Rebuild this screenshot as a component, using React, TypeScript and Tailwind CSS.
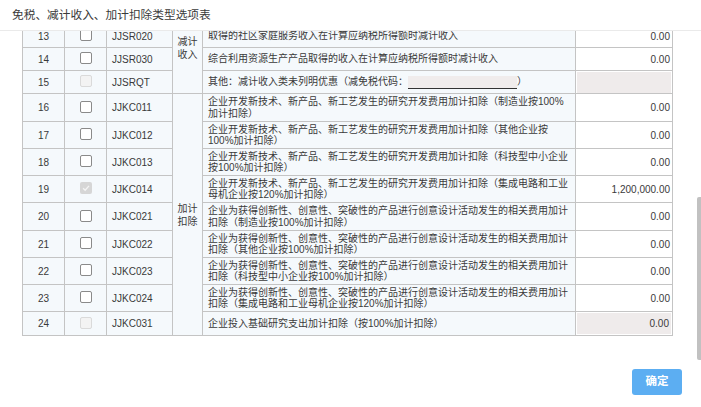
import type { ReactNode } from "react";

type Box = "normal" | "disabled" | "checked";

interface Row {
  no: number;
  code: string;
  box: Box;
  desc: ReactNode[];
  amount: string | null;
  gray?: boolean;
  h: string;
}

const font = { fontFamily: '"Liberation Sans", "Noto Sans CJK SC", sans-serif' };

const rows: Row[] = [
  { no: 13, code: "JJSR020", box: "normal", desc: ["取得的社区家庭服务收入在计算应纳税所得额时减计收入"], amount: "0.00", h: "h-[23px]" },
  { no: 14, code: "JJSR030", box: "normal", desc: ["综合利用资源生产产品取得的收入在计算应纳税所得额时减计收入"], amount: "0.00", h: "h-[23px]" },
  {
    no: 15,
    code: "JJSRQT",
    box: "disabled",
    desc: [
      <span className="flex items-center">
        其他：减计收入类未列明优惠（减免税代码：
        <span className="inline-block w-[109px] h-[13px] bg-[#f0ecec] border-b border-[#333]" />
        ）
      </span>,
    ],
    amount: null,
    gray: true,
    h: "h-[23px]",
  },
  { no: 16, code: "JJKC011", box: "normal", desc: ["企业开发新技术、新产品、新工艺发生的研究开发费用加计扣除（制造业按100%", "加计扣除）"], amount: "0.00", h: "h-[28px]" },
  { no: 17, code: "JJKC012", box: "normal", desc: ["企业开发新技术、新产品、新工艺发生的研究开发费用加计扣除（其他企业按", "100%加计扣除）"], amount: "0.00", h: "h-[27px]" },
  { no: 18, code: "JJKC013", box: "normal", desc: ["企业开发新技术、新产品、新工艺发生的研究开发费用加计扣除（科技型中小企业", "按100%加计扣除）"], amount: "0.00", h: "h-[27px]" },
  { no: 19, code: "JJKC014", box: "checked", desc: ["企业开发新技术、新产品、新工艺发生的研究开发费用加计扣除（集成电路和工业", "母机企业按120%加计扣除）"], amount: "1,200,000.00", h: "h-[27px]" },
  { no: 20, code: "JJKC021", box: "normal", desc: ["企业为获得创新性、创意性、突破性的产品进行创意设计活动发生的相关费用加计", "扣除（制造业按100%加计扣除）"], amount: "0.00", h: "h-[28px]" },
  { no: 21, code: "JJKC022", box: "normal", desc: ["企业为获得创新性、创意性、突破性的产品进行创意设计活动发生的相关费用加计", "扣除（其他企业按100%加计扣除）"], amount: "0.00", h: "h-[27px]" },
  { no: 22, code: "JJKC023", box: "normal", desc: ["企业为获得创新性、创意性、突破性的产品进行创意设计活动发生的相关费用加计", "扣除（科技型中小企业按100%加计扣除）"], amount: "0.00", h: "h-[27px]" },
  { no: 23, code: "JJKC024", box: "normal", desc: ["企业为获得创新性、创意性、突破性的产品进行创意设计活动发生的相关费用加计", "扣除（集成电路和工业母机企业按120%加计扣除）"], amount: "0.00", h: "h-[27px]" },
  { no: 24, code: "JJKC031", box: "disabled", desc: ["企业投入基础研究支出加计扣除（按100%加计扣除）"], amount: "0.00", gray: true, h: "h-[24px]" },
];

function CheckBox({ state }: { state: Box }) {
  if (state === "checked") {
    return (
      <span className="flex items-center justify-center w-[12px] h-[12px] rounded-[2px] bg-[#d6d6d6] mb-[2px]">
        <svg viewBox="0 0 12 12" className="w-[10px] h-[10px]">
          <path d="M2.5 6.2 L5 8.6 L9.6 3.4" fill="none" stroke="#f4f4f4" strokeWidth="1.6" />
        </svg>
      </span>
    );
  }
  if (state === "disabled") {
    return <span className="block w-[12px] h-[12px] rounded-[2px] border border-[#dadada] bg-[#f3f3f3] mb-[2px]" />;
  }
  return <span className="block w-[12px] h-[12px] rounded-[2px] border border-[#8a8a8a] bg-white mb-[2px]" />;
}

const cell = "border border-[#c4c4c4] bg-[#f5f9fc] p-0";

export default function App() {
  return (
    <div
      className="w-[701px] h-[407px] bg-white flex flex-col relative overflow-hidden text-[#3a3a3a] [text-spacing-trim:space-all]"
      style={font}
    >
      <div className="h-[31px] shrink-0 border-b border-[#eaeaea] flex items-center pl-[12px] pb-[1px] text-[11.7px]">
        免税、减计收入、加计扣除类型选项表
      </div>

      <div className="h-[330px] shrink-0 overflow-hidden">
        <table className="table-fixed border-collapse w-[650px] ml-[22px] -mt-[7px] text-[10px]">
          <colgroup>
            <col className="w-[42px]" />
            <col className="w-[42px]" />
            <col className="w-[66px]" />
            <col className="w-[30px]" />
            <col className="w-[373px]" />
            <col className="w-[97px]" />
          </colgroup>
          <tbody>
            {rows.map((r) => (
              <tr key={r.no}>
                <td className={`${cell} ${r.h} text-center`}>{r.no}</td>
                <td className={cell}>
                  <div className="flex justify-center items-center">
                    <CheckBox state={r.box} />
                  </div>
                </td>
                <td className={`${cell} pl-[5px]`}>{r.code}</td>
                {r.no === 13 && (
                  <td rowSpan={3} className={`${cell} align-top pt-[10px] text-center leading-[13px]`}>
                    减计
                    <br />
                    收入
                  </td>
                )}
                {r.no === 16 && (
                  <td rowSpan={9} className={`${cell} align-middle text-center leading-[13px]`}>
                    加计
                    <br />
                    扣除
                  </td>
                )}
                <td className={`${cell} pl-[5px] leading-[11.5px]`}>
                  {r.desc.map((line, i) => (
                    <div key={i} className="whitespace-nowrap">
                      {line}
                    </div>
                  ))}
                </td>
                <td className="border border-[#c4c4c4] bg-white p-0">
                  {r.gray ? (
                    <div className="mx-[1px] h-[21px] bg-[#efebeb] flex items-center justify-end pr-[2px]">{r.amount}</div>
                  ) : (
                    <div className="text-right pr-[2px]">{r.amount}</div>
                  )}
                </td>
              </tr>
            ))}
          </tbody>
        </table>
      </div>

      <div className="absolute right-0 top-[197px] w-[4px] h-[163px] bg-[#c1c1c1] rounded-l-[2px]" />

      <div className="flex justify-end pr-[19px] pt-[8px]">
        <button className="w-[50px] h-[26px] rounded-[3px] bg-[#5caef2] text-white text-[11.5px] font-bold">
          确定
        </button>
      </div>
    </div>
  );
}
